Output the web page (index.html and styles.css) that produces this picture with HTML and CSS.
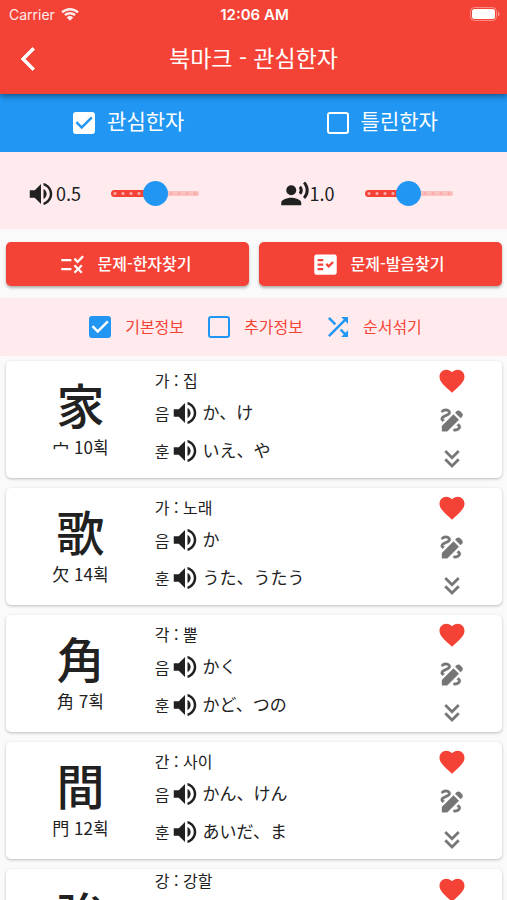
FILE: index.html
```html
<!DOCTYPE html>
<html lang="ko">
<head>
    <meta charset="UTF-8">
    <meta name="viewport" content="width=device-width, initial-scale=1.0">
    <title>북마크 - 관심한자</title>
    <link rel="stylesheet" href="styles.css">
</head>
<body>
    <svg class="sprite" aria-hidden="true">
        <symbol id="volume" viewBox="0 0 24 24"><path d="M3 9v6h4l5 5V4L7 9H3zm13.5 3c0-1.77-1.02-3.29-2.5-4.03v8.05c1.48-.73 2.5-2.25 2.5-4.02zM14 3.23v2.06c2.89.86 5 3.54 5 6.71s-2.11 5.85-5 6.71v2.06c4.01-.91 7-4.49 7-8.77s-2.99-7.86-7-8.77z"/></symbol>
        <symbol id="voice" viewBox="0 0 24 24"><circle cx="9" cy="9" r="4"/><path d="M9 15c-2.67 0-8 1.34-8 4v2h16v-2c0-2.66-5.33-4-8-4zm7.76-9.64l-1.68 1.69c.84 1.18.84 2.71 0 3.89l1.68 1.69c2.02-2.02 2.02-5.07 0-7.27zM20.07 2l-1.63 1.63c2.77 3.02 2.77 7.56 0 10.74L20.07 16c3.9-3.89 3.91-9.95 0-14z"/></symbol>
        <symbol id="rule" viewBox="0 0 24 24"><path d="M16.54 11L13 7.46l1.41-1.41 2.12 2.12 4.24-4.24 1.41 1.41L16.54 11zM11 7H2v2h9V7zm10 6.41L19.59 12 17 14.59 14.41 12 13 13.41 15.59 16 13 18.59 14.41 20 17 17.41 19.59 20 21 18.59 18.41 16 21 13.41zM11 15H2v2h9v-2z"/></symbol>
        <symbol id="fact" viewBox="0 0 24 24"><path fill-rule="evenodd" d="M20 3H4c-1.1 0-2 .9-2 2v14c0 1.1.9 2 2 2h16c1.1 0 2-.9 2-2V5c0-1.1-.9-2-2-2zM10 17H5v-2h5v2zm0-4H5v-2h5v2zm0-4H5V7h5v2zm4.82 6L12 12.16l1.41-1.41 1.41 1.42L17.99 9l1.42 1.42L14.82 15z"/></symbol>
        <symbol id="shuffle" viewBox="0 0 24 24"><path d="M10.59 9.17L5.41 4 4 5.41l5.17 5.17 1.42-1.41zM14.5 4l2.04 2.04L4 18.59 5.41 20 17.96 7.46 20 9.5V4h-5.5zm.33 9.41l-1.41 1.41 3.13 3.13L14.5 20H20v-5.5l-2.04 2.04-3.13-3.13z"/></symbol>
        <symbol id="heart" viewBox="0 0 24 24"><path d="M12 21.35l-1.45-1.32C5.4 15.36 2 12.28 2 8.5 2 5.42 4.42 3 7.5 3c1.74 0 3.41.81 4.5 2.09C13.09 3.81 14.76 3 16.5 3 19.58 3 22 5.42 22 8.5c0 3.78-3.4 6.86-8.55 11.54L12 21.35z"/></symbol>
        <symbol id="draw" viewBox="0 0 24 24"><path stroke="currentColor" stroke-width=".3" stroke-linejoin="round" d="M18.85 10.39l1.06-1.06c.78-.78.78-2.05 0-2.83L18.5 5.09c-.78-.78-2.05-.78-2.83 0l-1.06 1.06 4.24 4.24zM13.19 7.56L4 16.76V21h4.24l9.19-9.19-4.24-4.25zM19 17.5c0 2.19-2.54 3.5-5 3.5-.55 0-1-.45-1-1s.45-1 1-1c1.54 0 3-.73 3-1.5 0-.47-.48-.87-1.23-1.2l1.48-1.48c1.07.63 1.75 1.47 1.75 2.68zM4.58 13.35C3.61 12.79 3 12.06 3 11c0-1.8 1.89-2.63 3.56-3.36C7.59 7.18 9 6.56 9 6c0-.41-.78-1-2-1-1.26 0-1.8.61-1.83.64-.35.41-.98.46-1.4.12-.41-.34-.49-.95-.15-1.38C3.73 4.24 4.76 3 7 3s4 1.32 4 3c0 1.87-1.93 2.72-3.64 3.47C6.42 9.88 5 10.5 5 11c0 .31.43.6 1.07.86l-1.49 1.49z"/></symbol>
        <symbol id="more" viewBox="0 0 24 24"><path stroke="currentColor" stroke-width=".3" d="M18 6.41L16.59 5 12 9.58 7.41 5 6 6.41l6 6zM18 13l-1.41-1.41L12 16.17l-4.59-4.58L6 13l6 6z"/></symbol>
    </svg>

    <div class="app">
        <header class="header">
            <div class="status">
                <div class="carrier">
                    <span>Carrier</span>
                    <svg class="wifi" viewBox="0 0 18 14" aria-hidden="true">
                        <path d="M1 5.4a11.6 11.6 0 0 1 16 0M3.9 8.2a7.5 7.5 0 0 1 10.2 0"/>
                        <path class="wifi-dot" d="M9 13.8L5.7 10.4a4.8 4.8 0 0 1 6.6 0z"/>
                    </svg>
                </div>
                <time>12:06 AM</time>
                <svg class="battery" viewBox="0 0 30 14" aria-hidden="true">
                    <rect class="battery-case" x="0.5" y="0.5" width="26" height="13" rx="4"/>
                    <rect x="2" y="2" width="23" height="10" rx="2.5"/>
                    <path class="battery-tip" d="M28 4.5c2 1 2 4 0 5z"/>
                </svg>
            </div>
            <div class="appbar">
                <button class="back" type="button" aria-label="뒤로">
                    <svg viewBox="0 0 12 24"><path d="M11.67 3.87L9.9 2.1 0 12l9.9 9.9 1.77-1.77L3.54 12z"/></svg>
                </button>
                <h1>북마크 - 관심한자</h1>
            </div>
        </header>

        <div class="tabs">
            <label class="tab"><input type="checkbox" checked> <span>관심한자</span></label>
            <label class="tab"><input type="checkbox"> <span>틀린한자</span></label>
        </div>

        <div class="sliders">
            <label class="slider">
                <svg class="icon"><use href="#volume"/></svg>
                <span>0.5</span>
                <input type="range" min="0" max="1" step="0.1" value="0.5" aria-label="음량">
            </label>
            <label class="slider">
                <svg class="icon"><use href="#voice"/></svg>
                <span>1.0</span>
                <input type="range" min="0" max="2" step="0.2" value="1" aria-label="속도">
            </label>
        </div>

        <div class="quiz">
            <button type="button"><svg class="icon"><use href="#rule"/></svg><span>문제-한자찾기</span></button>
            <button type="button"><svg class="icon"><use href="#fact"/></svg><span>문제-발음찾기</span></button>
        </div>

        <div class="options">
            <label><input type="checkbox" checked> <span>기본정보</span></label>
            <label><input type="checkbox"> <span>추가정보</span></label>
            <button type="button"><svg class="icon"><use href="#shuffle"/></svg><span>순서섞기</span></button>
        </div>

        <main class="list">
            <article class="card">
                <div class="kanji">
                    <h2 lang="ja">家</h2>
                    <p>宀 10획</p>
                </div>
                <div class="info">
                    <p class="meaning">가 : 집</p>
                    <div class="reading">음<button type="button" aria-label="음 듣기"><svg class="icon"><use href="#volume"/></svg></button><span lang="ja">か、け</span></div>
                    <div class="reading">훈<button type="button" aria-label="훈 듣기"><svg class="icon"><use href="#volume"/></svg></button><span lang="ja">いえ、や</span></div>
                </div>
                <div class="actions">
                    <button class="like" type="button" aria-label="관심"><svg class="icon"><use href="#heart"/></svg></button>
                    <button type="button" aria-label="쓰기"><svg class="icon"><use href="#draw"/></svg></button>
                    <button type="button" aria-label="더보기"><svg class="icon"><use href="#more"/></svg></button>
                </div>
            </article>

            <article class="card">
                <div class="kanji">
                    <h2 lang="ja">歌</h2>
                    <p>欠 14획</p>
                </div>
                <div class="info">
                    <p class="meaning">가 : 노래</p>
                    <div class="reading">음<button type="button" aria-label="음 듣기"><svg class="icon"><use href="#volume"/></svg></button><span lang="ja">か</span></div>
                    <div class="reading">훈<button type="button" aria-label="훈 듣기"><svg class="icon"><use href="#volume"/></svg></button><span lang="ja">うた、うたう</span></div>
                </div>
                <div class="actions">
                    <button class="like" type="button" aria-label="관심"><svg class="icon"><use href="#heart"/></svg></button>
                    <button type="button" aria-label="쓰기"><svg class="icon"><use href="#draw"/></svg></button>
                    <button type="button" aria-label="더보기"><svg class="icon"><use href="#more"/></svg></button>
                </div>
            </article>

            <article class="card">
                <div class="kanji">
                    <h2 lang="ja">角</h2>
                    <p>角 7획</p>
                </div>
                <div class="info">
                    <p class="meaning">각 : 뿔</p>
                    <div class="reading">음<button type="button" aria-label="음 듣기"><svg class="icon"><use href="#volume"/></svg></button><span lang="ja">かく</span></div>
                    <div class="reading">훈<button type="button" aria-label="훈 듣기"><svg class="icon"><use href="#volume"/></svg></button><span lang="ja">かど、つの</span></div>
                </div>
                <div class="actions">
                    <button class="like" type="button" aria-label="관심"><svg class="icon"><use href="#heart"/></svg></button>
                    <button type="button" aria-label="쓰기"><svg class="icon"><use href="#draw"/></svg></button>
                    <button type="button" aria-label="더보기"><svg class="icon"><use href="#more"/></svg></button>
                </div>
            </article>

            <article class="card">
                <div class="kanji">
                    <h2 lang="ja">間</h2>
                    <p>門 12획</p>
                </div>
                <div class="info">
                    <p class="meaning">간 : 사이</p>
                    <div class="reading">음<button type="button" aria-label="음 듣기"><svg class="icon"><use href="#volume"/></svg></button><span lang="ja">かん、けん</span></div>
                    <div class="reading">훈<button type="button" aria-label="훈 듣기"><svg class="icon"><use href="#volume"/></svg></button><span lang="ja">あいだ、ま</span></div>
                </div>
                <div class="actions">
                    <button class="like" type="button" aria-label="관심"><svg class="icon"><use href="#heart"/></svg></button>
                    <button type="button" aria-label="쓰기"><svg class="icon"><use href="#draw"/></svg></button>
                    <button type="button" aria-label="더보기"><svg class="icon"><use href="#more"/></svg></button>
                </div>
            </article>

            <article class="card">
                <div class="kanji">
                    <h2 lang="ja">強</h2>
                    <p>弓 11획</p>
                </div>
                <div class="info">
                    <p class="meaning">강 : 강할</p>
                    <div class="reading">음<button type="button" aria-label="음 듣기"><svg class="icon"><use href="#volume"/></svg></button><span lang="ja">きょう、ごう</span></div>
                    <div class="reading">훈<button type="button" aria-label="훈 듣기"><svg class="icon"><use href="#volume"/></svg></button><span lang="ja">つよい、つよまる、つよめる、しいる</span></div>
                </div>
                <div class="actions">
                    <button class="like" type="button" aria-label="관심"><svg class="icon"><use href="#heart"/></svg></button>
                    <button type="button" aria-label="쓰기"><svg class="icon"><use href="#draw"/></svg></button>
                    <button type="button" aria-label="더보기"><svg class="icon"><use href="#more"/></svg></button>
                </div>
            </article>
        </main>
    </div>
</body>
</html>
```
FILE: styles.css
```css
* { box-sizing: border-box; }
body { margin: 0; background: #fafafa; color: #212121; font-family: "Noto Sans CJK KR", sans-serif; font-size: 16px; }
h1, h2, p { margin: 0; }
button { background: none; border: none; padding: 0; color: inherit; font: inherit; cursor: pointer; }
.sprite { display: none; }
.icon { display: block; flex: none; width: 30px; height: 30px; fill: currentColor; }
.app { display: flex; flex-direction: column; height: 100vh; }

/* header */
.header { position: relative; z-index: 1; flex: none; background: #f44336; color: white; box-shadow: 0 2px 6px rgba(0, 0, 0, 0.45); }
.status { display: grid; grid-template-columns: 1fr auto 1fr; align-items: center; height: 28px; padding: 0 7px 0 9px; font-family: Inter, sans-serif; font-size: 14px; }
.carrier { display: flex; align-items: center; gap: 6px; opacity: 0.9; }
.status time { font-size: 15px; font-weight: 600; }
.wifi { width: 18px; height: 14px; fill: none; stroke: white; stroke-width: 2.4; }
.wifi-dot { fill: white; stroke: none; }
.battery { justify-self: end; width: 30px; height: 14px; fill: white; }
.battery-case { fill: none; stroke: rgba(255, 255, 255, 0.4); }
.battery-tip { fill: rgba(255, 255, 255, 0.5); }
.appbar { display: grid; grid-template-columns: 56px 1fr 56px; align-items: center; height: 66px; padding-bottom: 4px; }
.back { padding-left: 21px; }
.back svg { display: block; width: 14px; height: 28px; overflow: visible; fill: white; stroke: white; stroke-width: 0.7; }
.appbar h1 { padding-bottom: 4px; font-size: 23px; font-weight: 400; line-height: 30px; text-align: center; }

/* check boxes */
input[type="checkbox"] { appearance: none; flex: none; width: 22px; height: 22px; margin: 4px; border: 2px solid currentColor; border-radius: 3px; color: inherit; }
input[type="checkbox"]:checked { background: currentColor; }
input[type="checkbox"]:checked::before { content: ""; display: block; width: 22px; height: 22px; margin: -2px; background: #2196f3; clip-path: polygon(39% 78%, 11% 50%, 19% 42%, 39% 62%, 81% 20%, 89% 28%); }
.options input[type="checkbox"]:checked::before { background: white; }

.tabs { display: flex; flex: none; height: 58px; background: #2196f3; color: white; }
.tab { display: flex; flex: 1; align-items: center; justify-content: center; gap: 8px; font-size: 21px; line-height: 28px; }
.tab span { padding-bottom: 6px; }

/* sliders */
.sliders { display: flex; flex: none; height: 77px; padding-top: 6px; background: #ffebee; }
.slider { display: flex; flex: 1; align-items: center; padding-left: 26px; font-size: 18px; }
.slider span { width: 55px; padding-bottom: 2px; }
.slider input { appearance: none; width: 88px; height: 26px; margin: 0; background: none; }
.slider input::-webkit-slider-runnable-track {
    height: 7px;
    border-radius: 4px;
    background:
        radial-gradient(circle, #f9aba7 1px, transparent 2px) left / 8px 7px,
        linear-gradient(#f44336, #f44336) left / 50% 7px no-repeat,
        linear-gradient(#fbc1c0, #fbc1c0) right / 50% 5px no-repeat;
}
.slider input::-webkit-slider-thumb { appearance: none; width: 25px; height: 25px; margin-top: -9px; border-radius: 50%; background: #2196f3; }

/* quiz buttons */
.quiz { display: flex; flex: none; gap: 10px; height: 69px; padding: 13px 5px 12px 6px; }
.quiz button { display: flex; flex: 1; align-items: center; justify-content: center; gap: 11px; padding-right: 4px; border-radius: 5px; background: #f44336; color: white; font-weight: 500; box-shadow: 0 2px 3px rgba(0, 0, 0, 0.3); }
.quiz .icon { width: 27px; height: 27px; }
.quiz span, .options span { padding-bottom: 2px; }

.options { display: flex; flex: none; align-items: center; justify-content: center; gap: 20px; height: 58px; background: #ffebee; color: #f44336; }
.options label, .options button { display: flex; align-items: center; gap: 10px; }
.options input[type="checkbox"], .options .icon { color: #2196f3; }

/* kanji list */
.list { display: flex; flex: 1; flex-direction: column; gap: 10px; min-height: 0; padding: 5px 5px 5px 6px; overflow-y: auto; scrollbar-width: none; }
.card { display: grid; flex: none; grid-template-columns: 3fr 5fr 2fr; align-items: center; height: 117px; border-radius: 5px; background: white; box-shadow: 0 1px 3px rgba(0, 0, 0, 0.25); }
.kanji { padding-bottom: 4px; text-align: center; }
.kanji h2 { padding-bottom: 4px; font-family: "Noto Sans CJK JP", sans-serif; font-size: 48px; font-weight: 500; line-height: 54px; }
.kanji p { font-size: 17px; line-height: 26px; }
.meaning { padding-bottom: 4px; line-height: 22px; }
.reading { display: flex; align-items: center; min-height: 38px; padding-bottom: 2px; line-height: 24px; }
.reading span { padding: 0 0 2px 3px; font-family: "Noto Sans CJK JP", sans-serif; font-size: 17px; line-height: 26px; }
.actions { display: flex; flex-direction: column; align-items: center; color: #757575; }
.actions button { display: flex; align-items: center; height: 39px; }
.actions .like { color: #f44336; }
```
